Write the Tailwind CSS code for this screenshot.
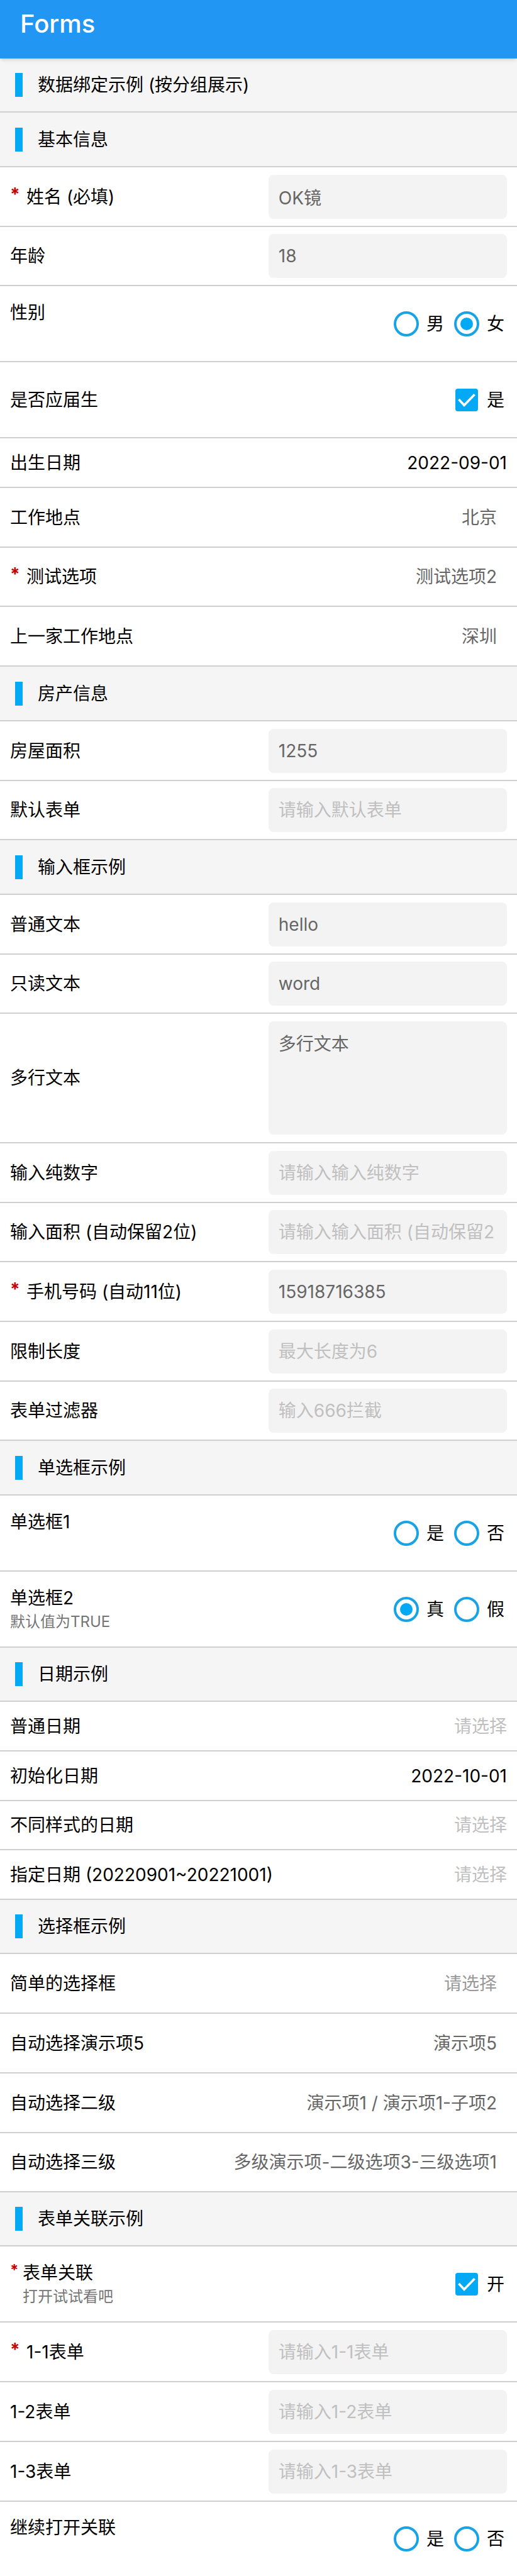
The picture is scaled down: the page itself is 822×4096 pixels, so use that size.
<!DOCTYPE html>
<html lang="zh-CN">
<head>
<meta charset="utf-8">
<meta name="viewport" content="width=device-width, initial-scale=1">
<title>Forms</title>
<script src="https://cdn.jsdelivr.net/npm/@tailwindcss/browser@4"></script>
</head>
<body class="bg-white font-['Inter','Noto_Sans_CJK_SC',sans-serif] text-[28px] leading-10 text-black">
<header class="relative bg-[#2196f3] pt-[18px] pb-[35px] pl-8 shadow-md">
  <h1 class="text-[40px] leading-10 font-medium text-white">Forms</h1>
</header>
<form>
  <h2 class="flex h-[86px] items-center gap-6 border-b-2 border-[#d0d0d0] bg-[#f5f5f5] pl-6"><span class="h-[38px] w-3 bg-[#03a9f4]"></span>数据绑定示例 (按分组展示)</h2>

  <!-- 基本信息 -->
  <h2 class="flex h-[87px] items-center gap-6 border-b-2 border-[#d0d0d0] bg-[#f5f5f5] pl-6"><span class="h-[38px] w-3 bg-[#03a9f4]"></span>基本信息</h2>
  <div class="flex h-[95px] items-center justify-between border-b-2 border-[#d0d0d0] px-4">
    <label for="name" class="flex"><span class="w-[26px] leading-8 font-bold text-[#c40000]">*</span>姓名 (必填)</label>
    <input id="name" type="text" value="OK镜" required class="h-[70px] w-[48%] rounded-lg bg-[#f3f3f3] px-4 text-[#666] placeholder:text-[#c0c0c0]">
  </div>
  <div class="flex h-[94px] items-center justify-between border-b-2 border-[#d0d0d0] px-4">
    <label for="age">年龄</label>
    <input id="age" type="text" value="18" class="h-[70px] w-[48%] rounded-lg bg-[#f3f3f3] px-4 text-[#666] placeholder:text-[#c0c0c0]">
  </div>
  <div role="radiogroup" aria-labelledby="gender" class="flex h-[121px] items-center justify-between border-b-2 border-[#d0d0d0] pr-5 pl-4">
    <div class="min-h-[76px]"><span id="gender">性别</span></div>
    <div class="flex gap-4">
      <label class="flex items-center gap-3"><input type="radio" name="gender" class="grid size-10 appearance-none place-content-center rounded-full border-4 border-[#18a3e6] before:size-5 before:rounded-full before:content-[''] checked:before:bg-[#03a9f4]">男</label>
      <label class="flex items-center gap-3"><input type="radio" name="gender" checked class="grid size-10 appearance-none place-content-center rounded-full border-4 border-[#18a3e6] before:size-5 before:rounded-full before:content-[''] checked:before:bg-[#03a9f4]">女</label>
    </div>
  </div>
  <div class="flex h-[121px] items-center justify-between border-b-2 border-[#d0d0d0] pr-5 pl-4">
    <span>是否应届生</span>
    <label class="flex items-center gap-[14px]"><span class="grid size-9"><input type="checkbox" checked class="peer col-start-1 row-start-1 size-9 appearance-none rounded border-4 border-[#03a9f4] checked:bg-[#03a9f4]"><svg viewBox="0 0 36 36" class="pointer-events-none invisible col-start-1 row-start-1 size-9 peer-checked:visible" fill="none" stroke="#fff" stroke-width="3.6"><path d="M5.4 17 14 26.3 30.6 9.2"/></svg></span>是</label>
  </div>
  <div class="flex h-[79px] items-center justify-between border-b-2 border-[#d0d0d0] px-4">
    <label for="birth">出生日期</label>
    <button id="birth" type="button">2022-09-01</button>
  </div>
  <div class="flex h-[95px] items-center justify-between border-b-2 border-[#d0d0d0] pr-8 pl-4">
    <label for="city">工作地点</label>
    <select id="city" class="appearance-none text-right text-[#666]"><option>北京</option></select>
  </div>
  <div class="flex h-[94px] items-center justify-between border-b-2 border-[#d0d0d0] pr-8 pl-4">
    <label for="test" class="flex"><span class="w-[26px] leading-8 font-bold text-[#c40000]">*</span>测试选项</label>
    <select id="test" class="appearance-none text-right text-[#666]"><option>测试选项2</option></select>
  </div>
  <div class="flex h-[95px] items-center justify-between border-b-2 border-[#d0d0d0] pr-8 pl-4">
    <label for="lastcity">上一家工作地点</label>
    <select id="lastcity" class="appearance-none text-right text-[#666]"><option>深圳</option></select>
  </div>

  <!-- 房产信息 -->
  <h2 class="flex h-[87px] items-center gap-6 border-b-2 border-[#d0d0d0] bg-[#f5f5f5] pl-6"><span class="h-[38px] w-3 bg-[#03a9f4]"></span>房产信息</h2>
  <div class="flex h-[95px] items-center justify-between border-b-2 border-[#d0d0d0] px-4">
    <label for="area">房屋面积</label>
    <input id="area" type="text" value="1255" class="h-[70px] w-[48%] rounded-lg bg-[#f3f3f3] px-4 text-[#666] placeholder:text-[#c0c0c0]">
  </div>
  <div class="flex h-[94px] items-center justify-between border-b-2 border-[#d0d0d0] px-4">
    <label for="default">默认表单</label>
    <input id="default" type="text" placeholder="请输入默认表单" class="h-[70px] w-[48%] rounded-lg bg-[#f3f3f3] px-4 text-[#666] placeholder:text-[#c0c0c0]">
  </div>

  <!-- 输入框示例 -->
  <h2 class="flex h-[87px] items-center gap-6 border-b-2 border-[#d0d0d0] bg-[#f5f5f5] pl-6"><span class="h-[38px] w-3 bg-[#03a9f4]"></span>输入框示例</h2>
  <div class="flex h-[95px] items-center justify-between border-b-2 border-[#d0d0d0] px-4">
    <label for="plain">普通文本</label>
    <input id="plain" type="text" value="hello" class="h-[70px] w-[48%] rounded-lg bg-[#f3f3f3] px-4 text-[#666] placeholder:text-[#c0c0c0]">
  </div>
  <div class="flex h-[94px] items-center justify-between border-b-2 border-[#d0d0d0] px-4">
    <label for="readonly">只读文本</label>
    <input id="readonly" type="text" value="word" readonly class="h-[70px] w-[48%] rounded-lg bg-[#f3f3f3] px-4 text-[#666] placeholder:text-[#c0c0c0]">
  </div>
  <div class="flex h-[206px] items-center justify-between border-b-2 border-[#d0d0d0] px-4">
    <label for="multi">多行文本</label>
    <textarea id="multi" class="h-[180px] w-[48%] resize-none rounded-lg bg-[#f3f3f3] px-4 py-4 text-[#666]">多行文本</textarea>
  </div>
  <div class="flex h-[95px] items-center justify-between border-b-2 border-[#d0d0d0] px-4">
    <label for="digits">输入纯数字</label>
    <input id="digits" type="text" placeholder="请输入输入纯数字" class="h-[70px] w-[48%] rounded-lg bg-[#f3f3f3] px-4 text-[#666] placeholder:text-[#c0c0c0]">
  </div>
  <div class="flex h-[94px] items-center justify-between border-b-2 border-[#d0d0d0] px-4">
    <label for="decimal">输入面积 (自动保留2位)</label>
    <input id="decimal" type="text" placeholder="请输入输入面积 (自动保留2位)" class="h-[70px] w-[48%] rounded-lg bg-[#f3f3f3] pr-5 pl-4 text-[#666] placeholder:text-[#c0c0c0]">
  </div>
  <div class="flex h-[95px] items-center justify-between border-b-2 border-[#d0d0d0] px-4">
    <label for="phone" class="flex"><span class="w-[26px] leading-8 font-bold text-[#c40000]">*</span>手机号码 (自动11位)</label>
    <input id="phone" type="text" value="15918716385" required class="h-[70px] w-[48%] rounded-lg bg-[#f3f3f3] px-4 text-[#666] placeholder:text-[#c0c0c0]">
  </div>
  <div class="flex h-[95px] items-center justify-between border-b-2 border-[#d0d0d0] px-4">
    <label for="maxlen">限制长度</label>
    <input id="maxlen" type="text" placeholder="最大长度为6" maxlength="6" class="h-[70px] w-[48%] rounded-lg bg-[#f3f3f3] px-4 text-[#666] placeholder:text-[#c0c0c0]">
  </div>
  <div class="flex h-[94px] items-center justify-between border-b-2 border-[#d0d0d0] px-4">
    <label for="filter">表单过滤器</label>
    <input id="filter" type="text" placeholder="输入666拦截" class="h-[70px] w-[48%] rounded-lg bg-[#f3f3f3] px-4 text-[#666] placeholder:text-[#c0c0c0]">
  </div>

  <!-- 单选框示例 -->
  <h2 class="flex h-[87px] items-center gap-6 border-b-2 border-[#d0d0d0] bg-[#f5f5f5] pl-6"><span class="h-[38px] w-3 bg-[#03a9f4]"></span>单选框示例</h2>
  <div role="radiogroup" aria-labelledby="radio1" class="flex h-[121px] items-center justify-between border-b-2 border-[#d0d0d0] pr-5 pl-4">
    <div class="min-h-[76px]"><span id="radio1">单选框1</span></div>
    <div class="flex gap-4">
      <label class="flex items-center gap-3"><input type="radio" name="radio1" class="grid size-10 appearance-none place-content-center rounded-full border-4 border-[#18a3e6] before:size-5 before:rounded-full before:content-[''] checked:before:bg-[#03a9f4]">是</label>
      <label class="flex items-center gap-3"><input type="radio" name="radio1" class="grid size-10 appearance-none place-content-center rounded-full border-4 border-[#18a3e6] before:size-5 before:rounded-full before:content-[''] checked:before:bg-[#03a9f4]">否</label>
    </div>
  </div>
  <div role="radiogroup" aria-labelledby="radio2" class="flex h-[121px] items-center justify-between border-b-2 border-[#d0d0d0] pr-5 pl-4">
    <div class="min-h-[76px]"><span id="radio2">单选框2</span><p class="text-[24px] leading-9 text-[#757575]">默认值为TRUE</p></div>
    <div class="flex gap-4">
      <label class="flex items-center gap-3"><input type="radio" name="radio2" checked class="grid size-10 appearance-none place-content-center rounded-full border-4 border-[#18a3e6] before:size-5 before:rounded-full before:content-[''] checked:before:bg-[#03a9f4]">真</label>
      <label class="flex items-center gap-3"><input type="radio" name="radio2" class="grid size-10 appearance-none place-content-center rounded-full border-4 border-[#18a3e6] before:size-5 before:rounded-full before:content-[''] checked:before:bg-[#03a9f4]">假</label>
    </div>
  </div>

  <!-- 日期示例 -->
  <h2 class="flex h-[86px] items-center gap-6 border-b-2 border-[#d0d0d0] bg-[#f5f5f5] pl-6"><span class="h-[38px] w-3 bg-[#03a9f4]"></span>日期示例</h2>
  <div class="flex h-[79px] items-center justify-between border-b-2 border-[#d0d0d0] px-4">
    <label for="date1">普通日期</label>
    <button id="date1" type="button" class="text-[#c0c0c0]">请选择</button>
  </div>
  <div class="flex h-[79px] items-center justify-between border-b-2 border-[#d0d0d0] px-4">
    <label for="date2">初始化日期</label>
    <button id="date2" type="button">2022-10-01</button>
  </div>
  <div class="flex h-[78px] items-center justify-between border-b-2 border-[#d0d0d0] px-4">
    <label for="date3">不同样式的日期</label>
    <button id="date3" type="button" class="text-[#c0c0c0]">请选择</button>
  </div>
  <div class="flex h-[79px] items-center justify-between border-b-2 border-[#d0d0d0] px-4">
    <label for="date4">指定日期 (20220901~20221001)</label>
    <button id="date4" type="button" class="text-[#c0c0c0]">请选择</button>
  </div>

  <!-- 选择框示例 -->
  <h2 class="flex h-[86px] items-center gap-6 border-b-2 border-[#d0d0d0] bg-[#f5f5f5] pl-6"><span class="h-[38px] w-3 bg-[#03a9f4]"></span>选择框示例</h2>
  <div class="flex h-[95px] items-center justify-between border-b-2 border-[#d0d0d0] pr-8 pl-4">
    <label for="select1">简单的选择框</label>
    <select id="select1" class="appearance-none text-right text-[#999]"><option>请选择</option></select>
  </div>
  <div class="flex h-[95px] items-center justify-between border-b-2 border-[#d0d0d0] pr-8 pl-4">
    <label for="select2">自动选择演示项5</label>
    <select id="select2" class="appearance-none text-right text-[#666]"><option>演示项5</option></select>
  </div>
  <div class="flex h-[95px] items-center justify-between border-b-2 border-[#d0d0d0] pr-8 pl-4">
    <label for="select3">自动选择二级</label>
    <select id="select3" class="appearance-none text-right text-[#666]"><option>演示项1 / 演示项1-子项2</option></select>
  </div>
  <div class="flex h-[94px] items-center justify-between border-b-2 border-[#d0d0d0] pr-8 pl-4">
    <label for="select4">自动选择三级</label>
    <select id="select4" class="appearance-none text-right text-[#666]"><option>多级演示项-二级选项3-三级选项1</option></select>
  </div>

  <!-- 表单关联示例 -->
  <h2 class="flex h-[86px] items-center gap-6 border-b-2 border-[#d0d0d0] bg-[#f5f5f5] pl-6"><span class="h-[38px] w-3 bg-[#03a9f4]"></span>表单关联示例</h2>
  <div class="flex h-[121px] items-center justify-between border-b-2 border-[#d0d0d0] pr-5 pl-4">
    <div class="flex min-h-[76px]">
      <span class="w-5 text-[24px] leading-8 font-bold text-[#c40000]">*</span>
      <div><span>表单关联</span><p class="text-[24px] leading-9 text-[#757575]">打开试试看吧</p></div>
    </div>
    <label class="flex items-center gap-[14px]"><span class="grid size-9"><input type="checkbox" checked class="peer col-start-1 row-start-1 size-9 appearance-none rounded border-4 border-[#03a9f4] checked:bg-[#03a9f4]"><svg viewBox="0 0 36 36" class="pointer-events-none invisible col-start-1 row-start-1 size-9 peer-checked:visible" fill="none" stroke="#fff" stroke-width="3.6"><path d="M5.4 17 14 26.3 30.6 9.2"/></svg></span>开</label>
  </div>
  <div class="flex h-[95px] items-center justify-between border-b-2 border-[#d0d0d0] px-4">
    <label for="f11" class="flex"><span class="w-[26px] leading-8 font-bold text-[#c40000]">*</span>1-1表单</label>
    <input id="f11" type="text" placeholder="请输入1-1表单" required class="h-[70px] w-[48%] rounded-lg bg-[#f3f3f3] px-4 text-[#666] placeholder:text-[#c0c0c0]">
  </div>
  <div class="flex h-[95px] items-center justify-between border-b-2 border-[#d0d0d0] px-4">
    <label for="f12">1-2表单</label>
    <input id="f12" type="text" placeholder="请输入1-2表单" class="h-[70px] w-[48%] rounded-lg bg-[#f3f3f3] px-4 text-[#666] placeholder:text-[#c0c0c0]">
  </div>
  <div class="flex h-[95px] items-center justify-between border-b-2 border-[#d0d0d0] px-4">
    <label for="f13">1-3表单</label>
    <input id="f13" type="text" placeholder="请输入1-3表单" class="h-[70px] w-[48%] rounded-lg bg-[#f3f3f3] px-4 text-[#666] placeholder:text-[#c0c0c0]">
  </div>
  <div role="radiogroup" aria-labelledby="more" class="flex h-[118px] items-center justify-between pr-5 pl-4">
    <div class="min-h-[76px]"><span id="more">继续打开关联</span></div>
    <div class="flex gap-4">
      <label class="flex items-center gap-3"><input type="radio" name="more" class="grid size-10 appearance-none place-content-center rounded-full border-4 border-[#18a3e6] before:size-5 before:rounded-full before:content-[''] checked:before:bg-[#03a9f4]">是</label>
      <label class="flex items-center gap-3"><input type="radio" name="more" class="grid size-10 appearance-none place-content-center rounded-full border-4 border-[#18a3e6] before:size-5 before:rounded-full before:content-[''] checked:before:bg-[#03a9f4]">否</label>
    </div>
  </div>
</form>
</body>
</html>
